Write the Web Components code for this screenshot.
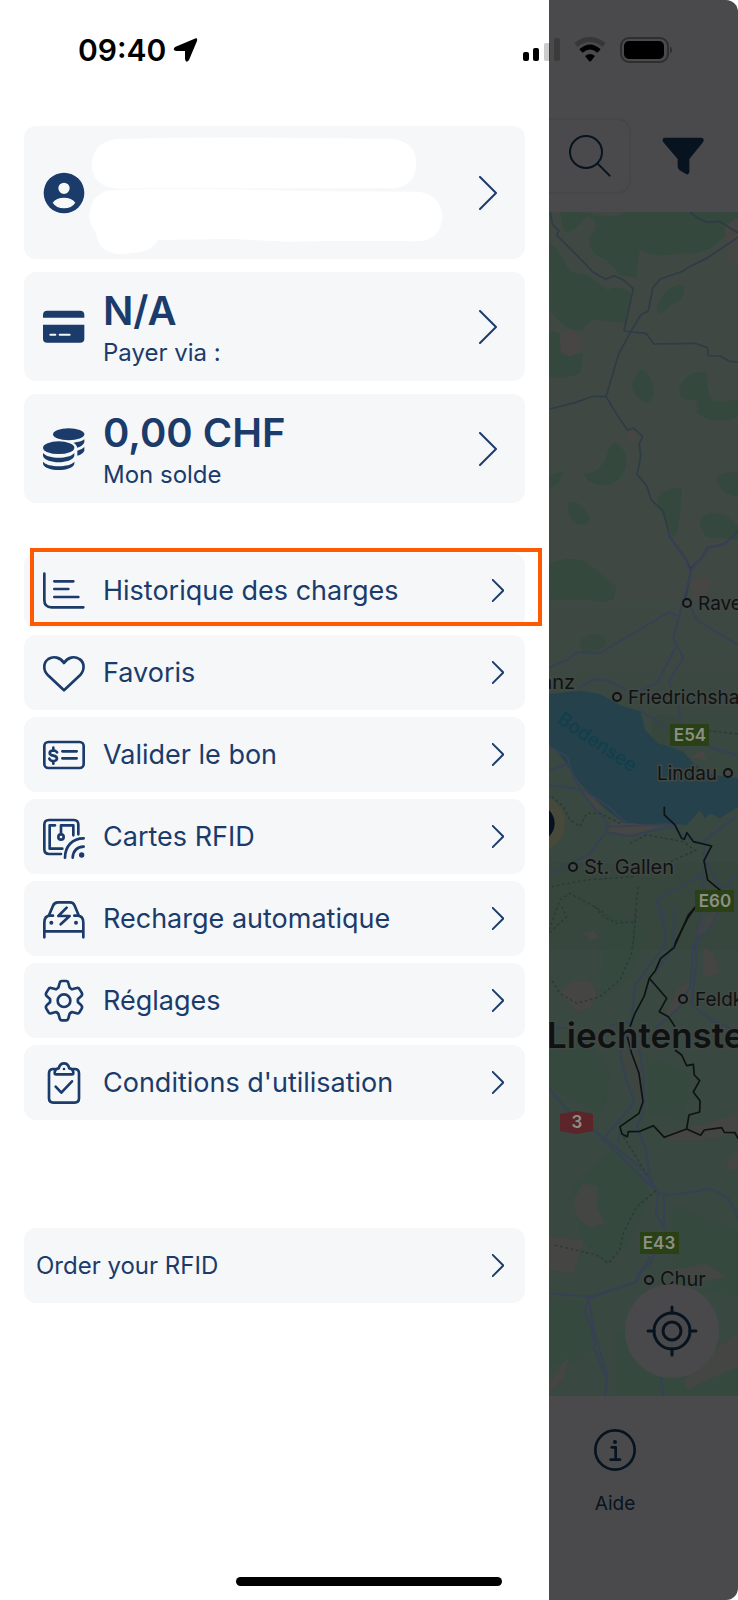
<!DOCTYPE html>
<html lang="fr">
<head>
<meta charset="utf-8">
<meta name="viewport" content="width=device-width, initial-scale=1">
<title>Menu</title>
<style>
    body {
        margin: 0;
        background: #fff;
        font-family: Inter, "Liberation Sans", sans-serif;
        --ink: #1b3b6b;
        --card: #f5f7f9;
        --dim: #4a4a4c;
        --dim-ink: #07141f;
    }
</style>
</head>
<body>
<charge-app>
    <status-bar slot="status">09:40</status-bar>

    <side-drawer slot="drawer">
        <summary-card slot="cards" icon="user" label="Profil">
            <svg slot="content" width="340" height="117" viewBox="249 42 1020 351" fill="#fff" overflow="visible" aria-hidden="true">
                <path d="M290 57Q560 50 850 54L1110 56Q1189 62 1189 131Q1187 200 1120 205L760 205L530 203L290 206Q217 200 215 132Q220 66 290 57Z"/>
                <path d="M270 211L440 206L640 208L860 213L1195 215Q1262 222 1267 290Q1262 360 1195 364L940 363L800 365L640 357L414 360Q402 388 360 396L310 403Q232 402 228 336Q208 320 208 285Q214 220 270 211Z"/>
            </svg>
        </summary-card>
        <summary-card slot="cards" icon="card">
            <span slot="title">N/A</span>
            <span slot="subtitle">Payer via :</span>
        </summary-card>
        <summary-card slot="cards" icon="coins">
            <span slot="title">0,00 CHF</span>
            <span slot="subtitle">Mon solde</span>
        </summary-card>

        <menu-row slot="menu" icon="history" highlighted>Historique des charges</menu-row>
        <menu-row slot="menu" icon="heart">Favoris</menu-row>
        <menu-row slot="menu" icon="voucher">Valider le bon</menu-row>
        <menu-row slot="menu" icon="rfid">Cartes RFID</menu-row>
        <menu-row slot="menu" icon="car">Recharge automatique</menu-row>
        <menu-row slot="menu" icon="gear">Réglages</menu-row>
        <menu-row slot="menu" icon="clipboard">Conditions d'utilisation</menu-row>

        <menu-row slot="footer" compact>Order your RFID</menu-row>
    </side-drawer>

    <map-page slot="page">
        <span slot="help">Aide</span>
    </map-page>
</charge-app>

<script>
// All icons share a 126 unit box, three units for each CSS pixel at the default size.
const ICONS = {
    user: `<path fill="currentColor" stroke="none" fill-rule="evenodd" d="M63 2a61 61 0 1 0 0 122a61 61 0 1 0 0-122ZM63 32a17 17 0 1 1 0 34a17 17 0 1 1 0-34ZM29 92Q40 77 63 77Q86 77 97 92Q86 109 63 109Q40 109 29 92Z"/>`,
    card: `<g fill="currentColor" stroke="none"><path d="M0 35V27Q0 14 13 14H111Q124 14 124 27V35Z"/><path d="M0 56H124V98Q124 110 111 110H13Q0 110 0 98Z"/></g><path stroke="#f5f7f9" stroke-width="6" d="M22 86H37M50 86H80"/>`,
    coins: `<g fill="currentColor" stroke="none"><ellipse cx="77" cy="19" rx="47" ry="18"/><ellipse cx="47" cy="59" rx="47" ry="19"/>
        <path d="M0 75C14 94 80 94 94 75V84C86 109 8 109 0 84Z"/><path d="M0 101C14 119 80 119 94 101V108C86 132 8 132 0 108Z"/>
        <path d="M92 44Q114 42 124 34V43Q120 55 103 59Q101 50 92 44Z"/><path d="M103 68Q117 65 124 57V68Q119 79 103 83Z"/></g>`,
    history: `<path d="M4 11V90Q4 112 26 112H121M34 34H91M34 57H76M34 81H106"/>`,
    heart: `<path d="M63 115L15 70C-1 54 1 31 16 21C32 11 52 16 63 33C74 16 94 11 109 21C125 31 126 54 111 70Z"/>`,
    voucher: `<rect x="4" y="24" width="118" height="78" rx="12"/><path d="M58 52H101M58 73H101M42 55Q38 49 31 49Q20 50 20 57Q20 63 31 65Q42 67 42 74Q41 81 31 81Q22 81 19 74M31 41V49M31 81V89"/>`,
    rfid: `<path d="M106 55V26Q106 12 92 12H18Q4 12 4 26V100Q4 114 18 114H54M36 28H20V98H58M54 54V28H91V58M66 125C66 91 88 67 122 67M89 125Q91 94 122 92"/><circle cx="54" cy="63" r="8"/><circle cx="116" cy="117" r="8" fill="currentColor" stroke="none"/>`,
    car: `<path d="M18 52L30 23Q34 13 45 13H81Q91 13 95 23L107 52M4 118V74Q4 53 22 53H30M94 53H104Q121 54 121 74V118M4 100H121M71 29L46 54H80L53 79"/><circle cx="25" cy="74" r="6" fill="currentColor" stroke="none"/><circle cx="99" cy="74" r="6" fill="currentColor" stroke="none"/>`,
    gear: `<path d="M50 9Q51 3 57 3H69Q75 3 76 9L80 23Q83 26 87 28L101 24Q107 22 110 28L116 38Q119 44 115 48L105 57Q104 62 105 67L115 76Q119 80 116 86L110 96Q107 102 101 100L87 96Q83 98 80 101L76 115Q75 121 69 121H57Q51 121 50 115L46 101Q43 98 39 96L25 100Q19 102 16 96L10 86Q7 80 11 76L21 67Q22 62 21 57L11 48Q7 44 10 38L16 28Q19 22 25 24L39 28Q43 26 46 23Z"/><circle cx="63" cy="62" r="19"/>`,
    clipboard: `<path d="M36 21H31Q18 21 18 34V109Q18 122 31 122H95Q108 122 108 109V34Q108 21 95 21H90M39 37Q35 37 35 33Q35 20 47 19Q51 4 63 4Q75 4 79 19Q91 20 91 33Q91 37 87 37ZM38 74L55 92L87 58"/><circle cx="63" cy="21" r="4" fill="currentColor" stroke="none"/>`,
    search: `<g stroke-width="6"><circle cx="51" cy="51" r="48"/><path d="M86 86L122 122"/></g>`,
    filter: `<path fill="currentColor" stroke="none" d="M8 8H118Q129 10 123 22L82 72V112Q80 121 72 117L52 105Q47 101 47 94V72L4 22Q-2 10 8 8Z"/>`,
    info: `<circle cx="63" cy="63" r="59"/><path d="M53 55H65V92M50 92H78"/><circle cx="63" cy="39" r="6" fill="currentColor" stroke="none"/>`
};

class AppIcon extends HTMLElement {
    constructor() {
        super();
        this.attachShadow({ mode: "open" });
    }

    connectedCallback() {
        this.shadowRoot.innerHTML = `
            <style>
                :host {
                    display: block;
                    flex: none;
                    width: 42px;
                    height: 42px;
                }
                svg {
                    display: block;
                    width: 100%;
                    height: 100%;
                    overflow: visible;
                }
            </style>
            <svg viewBox="0 0 126 126" fill="none" stroke="currentColor" stroke-width="8" stroke-linecap="round" stroke-linejoin="round" aria-hidden="true">${ICONS[this.getAttribute("name")]}</svg>
        `;
    }
}

class ArrowIcon extends HTMLElement {
    constructor() {
        super();
        this.attachShadow({ mode: "open" });
    }

    connectedCallback() {
        this.shadowRoot.innerHTML = `
            <style>
                :host {
                    display: block;
                    flex: none;
                    width: 12px;
                    height: 23px;
                }
                :host([large]) {
                    width: 18px;
                    height: 34px;
                }
                svg {
                    display: block;
                    width: 100%;
                    height: 100%;
                }
                path {
                    vector-effect: non-scaling-stroke;
                }
            </style>
            <svg viewBox="0 0 18 34" fill="none" stroke="currentColor" stroke-width="2" stroke-linecap="round" stroke-linejoin="round" aria-hidden="true"><path d="M1 1L17 17L1 33"/></svg>
        `;
    }
}

class SummaryCard extends HTMLElement {
    constructor() {
        super();
        this.attachShadow({ mode: "open" });
    }

    connectedCallback() {
        const label = this.getAttribute("label");
        this.shadowRoot.innerHTML = `
            <style>
                :host {
                    display: block;
                }
                button {
                    display: flex;
                    align-items: center;
                    gap: 18px;
                    box-sizing: border-box;
                    width: 100%;
                    min-height: 109px;
                    padding: 8px 28px 8px 19px;
                    border: 0;
                    border-radius: 12px;
                    background: var(--card);
                    color: var(--ink);
                    font: inherit;
                    text-align: left;
                }
                .text {
                    display: flex;
                    flex: 1;
                    flex-direction: column;
                    min-width: 0;
                }
                ::slotted([slot="title"]) {
                    padding-top: 2px;
                    font-size: 40px;
                    font-weight: 600;
                    line-height: 50px;
                }
                ::slotted([slot="subtitle"]) {
                    font-size: 24px;
                    line-height: 33px;
                }
                ::slotted(svg) {
                    display: block;
                }
            </style>
            <button type="button"${label ? ` aria-label="${label}"` : ""}>
                <app-icon name="${this.getAttribute("icon")}"></app-icon>
                <span class="text">
                    <slot name="content"></slot>
                    <slot name="title"></slot>
                    <slot name="subtitle"></slot>
                </span>
                <arrow-icon large></arrow-icon>
            </button>
        `;
    }
}

class MenuRow extends HTMLElement {
    constructor() {
        super();
        this.attachShadow({ mode: "open" });
    }

    connectedCallback() {
        const icon = this.getAttribute("icon");
        this.shadowRoot.innerHTML = `
            <style>
                :host {
                    display: block;
                    position: relative;
                }
                button {
                    display: flex;
                    align-items: center;
                    gap: 18px;
                    box-sizing: border-box;
                    width: 100%;
                    min-height: 75px;
                    padding: 8px 21px 8px 19px;
                    border: 0;
                    border-radius: 12px;
                    background: var(--card);
                    color: var(--ink);
                    font: inherit;
                    font-size: 27px;
                    line-height: 36px;
                    text-align: left;
                }
                :host([compact]) button {
                    padding-left: 12px;
                    font-size: 24px;
                }
                .text {
                    flex: 1;
                }
                /* Marker frame laid over the row and past its right edge */
                :host([highlighted])::after {
                    content: "";
                    position: absolute;
                    inset: -5px -17px 2px 6px;
                    border: 4px solid #ff5a00;
                    pointer-events: none;
                }
            </style>
            <button type="button">
                ${icon ? `<app-icon name="${icon}"></app-icon>` : ""}
                <span class="text"><slot></slot></span>
                <arrow-icon></arrow-icon>
            </button>
        `;
    }
}

class SideDrawer extends HTMLElement {
    constructor() {
        super();
        this.attachShadow({ mode: "open" });
    }

    connectedCallback() {
        this.shadowRoot.innerHTML = `
            <style>
                :host {
                    display: block;
                    box-sizing: border-box;
                    padding: 126px 24px 48px;
                    background: #fff;
                }
                section, nav {
                    display: flex;
                    flex-direction: column;
                }
                section {
                    gap: 13px;
                }
                nav {
                    gap: 7px;
                    margin-top: 50px;
                }
                footer {
                    margin-top: 108px;
                }
            </style>
            <section><slot name="cards"></slot></section>
            <nav><slot name="menu"></slot></nav>
            <footer><slot name="footer"></slot></footer>
        `;
    }
}

class StatusBar extends HTMLElement {
    constructor() {
        super();
        this.attachShadow({ mode: "open" });
    }

    connectedCallback() {
        this.shadowRoot.innerHTML = `
            <style>
                :host {
                    display: flex;
                    align-items: center;
                    justify-content: space-between;
                    padding: 30px 64px 0 78px;
                    color: #000;
                    font-size: 30px;
                    font-weight: 600;
                    line-height: 40px;
                }
                div {
                    display: flex;
                    align-items: center;
                    gap: 7px;
                }
                .signals {
                    gap: 14px;
                }
                svg {
                    display: block;
                }
            </style>
            <div>
                <time><slot></slot></time>
                <svg width="25" height="24" viewBox="0 0 25 24" aria-hidden="true"><path d="M21 1Q25 -1 24 3L16 22Q13 26 12 21V13H3Q-1 12 2 9Z"/></svg>
            </div>
            <div class="signals">
                <svg width="37" height="26" viewBox="0 0 37 26" aria-hidden="true">
                    <rect x="0" y="15" width="6" height="9" rx="2"/>
                    <rect x="10" y="11" width="6" height="13" rx="2"/>
                    <rect x="21" y="6" width="6" height="18" rx="2" fill-opacity=".2"/>
                    <rect x="31" y="1" width="6" height="23" rx="2" fill-opacity=".2"/>
                </svg>
                <svg width="32" height="26" viewBox="0 0 32 26" aria-hidden="true">
                    <path d="M2 8Q16-3 30 8" fill="none" stroke="#000" stroke-opacity=".25" stroke-width="5"/>
                    <path d="M7 14Q16 6 25 14" fill="none" stroke="#000" stroke-width="5"/>
                    <path d="M11 19Q16 15 21 19L17 24Q16 25 15 24Z"/>
                </svg>
                <svg width="54" height="26" viewBox="0 0 54 26" aria-hidden="true">
                    <rect x="1" y="1" width="47" height="24" rx="8" fill="none" stroke="#2e2e30" stroke-width="2"/>
                    <rect x="4" y="4" width="40" height="18" rx="5"/>
                    <path d="M50 9Q54 13 50 17Z" fill="#2e2e30"/>
                </svg>
            </div>
        `;
    }
}

class AreaMap extends HTMLElement {
    constructor() {
        super();
        this.attachShadow({ mode: "open" });
    }

    connectedCallback() {
        this.shadowRoot.innerHTML = `
            <style>
                :host {
                    display: block;
                    overflow: hidden;
                    background: #394840;
                }
                svg {
                    display: block;
                    width: 100%;
                    height: 100%;
                }
                text {
                    fill: #101112;
                    stroke: #414945;
                    stroke-width: 3px;
                    paint-order: stroke;
                    font-size: 19px;
                }
                .lake {
                    fill: #113f4c;
                    stroke: none;
                    font-weight: 500;
                }
                .country {
                    font-size: 35px;
                    font-weight: 600;
                }
                .town {
                    font-size: 20px;
                }
                .badge text {
                    fill: #8b8f87;
                    stroke: none;
                    font-size: 17px;
                    font-weight: 600;
                    text-anchor: middle;
                }
                .wood { fill: #34483d; }
                .urban { fill: #484645; }
                .road { fill: none; stroke: #2f3b45; stroke-width: 5; stroke-linejoin: round; }
                .route { fill: none; stroke: #374154; stroke-width: 6; stroke-linejoin: round; }
                .border { fill: none; stroke: #0d1213; stroke-width: 5; stroke-linejoin: round; }
                .canton { fill: none; stroke: #2b3932; stroke-width: 4; stroke-dasharray: 8 8; }
                .dot circle { fill: #444846; stroke: #101112; stroke-width: 2; }
            </style>
            <svg viewBox="549 212 189 1184" preserveAspectRatio="xMinYMin slice" role="img" aria-label="Carte">
                <defs>
                    <linearGradient id="ground" x1="0" y1="0" x2="0" y2="1">
                        <stop offset=".7" stop-color="#404844"/>
                        <stop offset="1" stop-color="#394840"/>
                    </linearGradient>
                </defs>
                <rect x="549" y="212" width="800" height="520" fill="url(#ground)"/>

                <!-- north, three units per pixel -->
                <g transform="translate(540 200) scale(.3333)">
                    <g class="wood">
                        <path d="M60 36L130 36Q240 60 250 36H594V90Q540 110 520 140Q470 165 420 160Q340 175 300 150Q290 180 290 235L240 225L200 180Q140 160 150 110Q190 60 140 50Q90 110 70 90Z"/>
                        <path d="M27 130Q50 140 70 180Q90 230 130 220Q170 240 200 270Q260 250 275 290L255 370L180 360Q150 350 130 390Q80 400 30 330Z"/>
                        <path d="M27 400Q60 380 70 440Q90 470 130 460L120 520Q80 540 27 530Z"/>
                        <path d="M350 320Q380 250 430 255Q440 300 390 315Q350 360 350 320Z"/>
                        <path d="M275 560Q300 470 335 540Q350 600 320 608Q290 600 275 560Z"/>
                        <path d="M420 560Q440 510 500 515Q500 580 520 605L594 600V650Q530 680 470 640Q480 590 440 600Q410 590 420 560Z"/>
                        <path d="M130 820Q190 820 205 750Q230 700 260 770Q260 840 200 855Q150 860 130 820Z"/>
                        <path d="M85 910Q110 890 150 950Q140 990 100 965Q80 940 85 910Z"/>
                        <path d="M350 900Q370 860 425 865Q420 1000 400 1010Q370 960 350 900Z"/>
                        <path d="M480 960Q500 930 560 945L594 980V1020L500 1010Q480 990 480 960ZM530 830Q560 810 594 820V890Q530 880 530 830Z"/>
                        <path d="M27 1100Q100 1050 160 1110Q230 1160 220 1200H27ZM27 830Q60 810 70 820Q50 870 27 860Z"/>
                    </g>
                    <path class="urban" d="M60 405L95 390L125 415L130 450L90 470L62 455ZM555 80L594 50V190L565 185ZM262 700L285 690L295 715L270 725ZM470 1150Q500 1120 515 1150L490 1200H460Z"/>
                    <path class="road" d="M30 36L38 75L57 92L50 105L105 160L160 217L197 238L223 227L250 240L280 266L252 393M450 36L475 55L502 67L538 64L594 99M594 112L500 175L440 205L430 213L360 238L338 264L325 333L303 344L272 395L235 465L198 590L230 642L262 690L280 684L308 710L298 730L302 770L291 823L320 857L333 898L370 935L389 1010L436 1074L453 1110L436 1200M252 393L318 400L342 432L465 430L502 443L505 467L540 468L570 484L594 486M30 627L105 608L160 589L198 590M453 1105L485 1073L503 1043L550 1034L580 1010L594 994"/>
                </g>

                <!-- lake area -->
                <g transform="translate(400 530) scale(.3333)">
                    <path class="wood" d="M447 100Q540 70 580 110L650 170Q640 220 600 215L450 190ZM540 330Q590 290 620 340Q600 370 545 365Z" opacity=".8"/>
                    <path class="wood" d="M760 560Q800 540 850 580L900 640L780 650Q740 610 760 560ZM447 1000H1014V1260H447Z" opacity=".35"/>
                    <path fill="#24414c" d="M447 492L540 482L600 492L660 525L722 545L735 600L775 640L850 665L880 700L940 735L1014 745V830L960 865L930 850L915 865L900 840L860 885L800 880L680 885L620 840L540 760L470 660L447 645Z"/>
                    <path class="urban" d="M550 780L600 830L595 850L560 810ZM630 880L700 880L780 890L690 915L630 905ZM870 165Q910 120 920 160L880 200ZM870 680L910 660L920 690Z"/>
                    <circle cx="410" cy="880" r="85" fill="#474a3a"/>
                    <circle cx="410" cy="880" r="54" fill="#06131f"/>
                    <path class="route" d="M805 0L815 30L855 85L873 128L820 325L850 383L806 455L818 485M1014 10L970 42L925 52L908 80L873 120M870 225L890 270L1014 345M832 258L808 246L598 370L530 367L505 388L447 413M828 350L772 458L725 480M535 475L580 448L620 450L680 480M718 540L830 610L940 655L1014 676M835 530L840 575M447 650L502 680L520 740L556 800L622 880L617 908L570 970L447 1035M447 722L510 700M447 765L550 780L620 825L680 880M622 908L690 918L820 888L850 920L935 948M622 890L820 882M1014 855L910 935M912 950L910 1080M912 980L965 1080M905 1035L770 1108L795 1200V1260M1014 1030L940 1110L880 1260"/>
                    <path class="border" d="M793 830V855L825 885L845 925L853 928L861 908L880 935L935 948L912 992L923 1050L962 1082M888 1130L863 1165L815 1260"/>
                    <path class="canton" d="M925 602L1014 612M455 800L490 830L510 870L540 890L560 850L600 850L660 880M455 1070L560 1050L700 1040L800 1000L890 960M690 940L740 915L850 935L890 965M715 1070L705 1150L700 1260M447 1200L480 1110L510 1090L600 1140L640 1170L700 1180"/>
                </g>

                <!-- south -->
                <g transform="translate(540 900) scale(.3333)">
                    <path fill="#324a3d" opacity=".5" d="M27 420L160 440L210 520L190 640L27 560ZM320 470L450 520L430 660L330 640ZM100 860L230 740L330 880L260 1030L200 1090L120 1010ZM400 920L594 990V1190L400 1140ZM27 1210L120 1200L180 1330L90 1390H27ZM230 1290L594 1390V1490H230ZM200 20L320 90L270 230L180 300Z"/>
                    <g class="urban" opacity=".8">
                        <path d="M60 280Q90 230 150 245L170 280L150 325L110 335ZM130 100L160 90L175 110L155 122ZM100 900L130 850L175 860L170 920L195 970L150 985L110 950ZM27 1010L130 1020L100 1120L27 1110Z"/>
                        <path d="M490 140L520 160L540 220L490 230ZM380 700L594 645V700L490 720L385 720ZM410 270L450 240L450 300L370 360ZM560 780L594 760V810L565 810ZM390 1110L500 1090L560 1130L470 1150ZM430 1440L540 1340L594 1300V1400L440 1470ZM27 1450L90 1360L70 1440L27 1475Z"/>
                        <path d="M470 90L500 40L550 20L520 80L475 110ZM235 440L300 370L310 620L290 600Z" opacity=".6"/>
                    </g>
                    <path class="canton" d="M290 30L275 160L240 240L180 290L110 310L60 280L35 240M165 20L190 50L230 70L280 65M250 710L350 870L290 920L250 1000L240 1050L205 1090L170 1065L40 1035M65 20L80 50L27 100"/>
                    <path class="route" d="M350 0L372 50L377 130L285 255L275 370L240 460L260 545L282 600L270 625L195 710M485 40L470 100L468 200L455 310L480 335L520 365L594 390M540 30L500 100L460 135L455 220L450 260L420 320L345 385M405 20L400 140L345 220M270 410L300 460L312 530L310 640L290 680L315 740L330 830L345 870M27 565L75 625L160 690L230 745L300 800L355 875L375 885L440 880L510 865L560 890L585 930L594 960M160 690L340 865M235 730L240 680M355 875L348 940L372 985V885M345 1060L330 1090L295 1120L285 1148L150 1190L27 1180M27 380L80 385M210 375L280 365"/>
                    <path class="route" d="M330 1070L290 1145L145 1195L135 1240L155 1290L165 1350L200 1440L195 1490M148 1200L160 1290L205 1435M362 1420L370 1490"/>
                    <path class="border" d="M467 20L445 45L402 143L362 175L346 212L328 235L312 290L285 340L270 380M328 235L380 295L358 335L385 350L405 380M262 410L275 460L297 520L309 605L297 640L240 680L246 702L262 710L265 695L300 694L340 677L373 712L440 687L482 706L493 690L545 683L553 697L585 698L594 716M405 450L425 465L440 497L460 493L463 525L479 542L460 576L480 602L479 636L447 645L440 687"/>
                </g>

                <g class="badge">
                    <rect x="670" y="724" width="39" height="22" fill="#2a4115"/><text x="690" y="741">E54</text>
                    <rect x="695" y="890" width="39" height="22" fill="#2a4115"/><text x="715" y="907">E60</text>
                    <rect x="640" y="1232" width="39" height="22" fill="#2a4115"/><text x="659" y="1249">E43</text>
                    <path d="M560 1114L577 1111L593 1114V1131L577 1134L560 1131Z" fill="#5c2529"/><text x="577" y="1128">3</text>
                </g>

                <g class="dot">
                    <circle cx="687" cy="603" r="4"/>
                    <circle cx="617" cy="697" r="4"/>
                    <circle cx="728" cy="773" r="4"/>
                    <circle cx="573" cy="867" r="4"/>
                    <circle cx="683" cy="999" r="4"/>
                    <circle cx="649" cy="1280" r="4"/>
                </g>
                <text x="698" y="610">Rave</text>
                <text x="575" y="689" text-anchor="end" class="town">anz</text>
                <text x="628" y="704">Friedrichsha</text>
                <text x="657" y="780">Lindau</text>
                <text class="lake" transform="translate(556 722) rotate(34)">Bodensee</text>
                <text x="584" y="874" class="town">St. Gallen</text>
                <text x="695" y="1006">Feldk</text>
                <text x="547" y="1048" class="country">Liechtenste</text>
                <text x="660" y="1286" class="town">Chur</text>
            </svg>
        `;
    }
}

class MapPage extends HTMLElement {
    constructor() {
        super();
        this.attachShadow({ mode: "open" });
    }

    connectedCallback() {
        this.shadowRoot.innerHTML = `
            <style>
                :host {
                    display: flex;
                    flex-direction: column;
                    overflow: hidden;
                    border-radius: 0 12px 12px 0;
                    background: var(--dim);
                    color: var(--dim-ink);
                }
                button {
                    display: block;
                    padding: 0;
                    border: 0;
                    background: none;
                    color: inherit;
                    font: inherit;
                }
                header {
                    display: flex;
                    align-items: center;
                    gap: 31px;
                    padding: 118px 34px 18px 0;
                }
                .search {
                    display: flex;
                    flex: 1;
                    align-items: center;
                    justify-content: flex-end;
                    box-sizing: border-box;
                    height: 76px;
                    padding-right: 18px;
                    border: 2px solid #464648;
                    border-left: 0;
                    border-radius: 0 14px 14px 0;
                }
                main {
                    display: flex;
                    position: relative;
                    flex: 1;
                    min-height: 0;
                }
                area-map {
                    flex: 1;
                    min-width: 0;
                }
                /* Floating button over the map */
                .locate {
                    position: absolute;
                    right: 19px;
                    bottom: 18px;
                    width: 94px;
                    height: 94px;
                    border-radius: 50%;
                    background: #49494b;
                }
                .locate svg {
                    display: block;
                    margin: auto;
                }
                footer {
                    display: flex;
                    box-sizing: border-box;
                    min-height: 204px;
                    padding: 33px 45px 0;
                }
                .help {
                    display: flex;
                    flex-direction: column;
                    align-items: center;
                    gap: 20px;
                    height: 100px;
                    font-size: 19px;
                    line-height: 26px;
                }
            </style>
            <header>
                <button class="search" type="button" aria-label="Rechercher"><app-icon name="search"></app-icon></button>
                <button type="button" aria-label="Filtrer"><app-icon name="filter"></app-icon></button>
            </header>
            <main>
                <area-map></area-map>
                <button class="locate" type="button" aria-label="Ma position">
                    <svg width="52" height="52" viewBox="0 0 52 52" fill="none" stroke="currentColor" stroke-width="3" stroke-linecap="round" aria-hidden="true">
                        <circle cx="26" cy="26" r="18"/><circle cx="26" cy="26" r="9"/>
                        <path d="M26 2V8M26 44V50M2 26H8M44 26H50"/>
                    </svg>
                </button>
            </main>
            <footer>
                <button class="help" type="button"><app-icon name="info"></app-icon><slot name="help"></slot></button>
            </footer>
        `;
    }
}

class ChargeApp extends HTMLElement {
    constructor() {
        super();
        this.attachShadow({ mode: "open" });
    }

    connectedCallback() {
        this.shadowRoot.innerHTML = `
            <style>
                :host {
                    display: grid;
                    position: relative;
                    grid-template-columns: minmax(0, 549fr) minmax(0, 189fr);
                    min-height: 100vh;
                    overflow: hidden;
                }
                /* System chrome floats over both panes */
                .status {
                    position: absolute;
                    inset: 0 0 auto;
                }
                .home {
                    position: absolute;
                    right: 32%;
                    bottom: 14px;
                    left: 32%;
                    height: 9px;
                    border-radius: 5px;
                    background: #000;
                }
            </style>
            <slot name="drawer"></slot>
            <slot name="page"></slot>
            <div class="status"><slot name="status"></slot></div>
            <div class="home"></div>
        `;
    }
}

customElements.define("app-icon", AppIcon);
customElements.define("arrow-icon", ArrowIcon);
customElements.define("summary-card", SummaryCard);
customElements.define("menu-row", MenuRow);
customElements.define("side-drawer", SideDrawer);
customElements.define("status-bar", StatusBar);
customElements.define("area-map", AreaMap);
customElements.define("map-page", MapPage);
customElements.define("charge-app", ChargeApp);
</script>
</body>
</html>
